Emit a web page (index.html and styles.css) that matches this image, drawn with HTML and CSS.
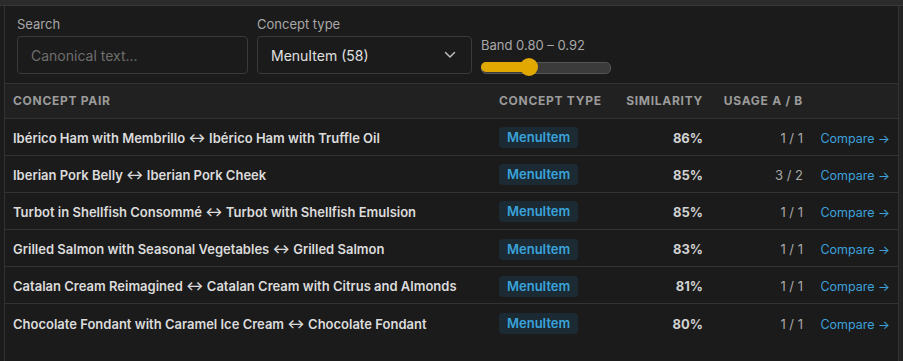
FILE: index.html
```html
<!DOCTYPE html>
<html lang="en">
<head>
    <meta charset="UTF-8">
    <meta name="viewport" content="width=device-width, initial-scale=1.0">
    <title>Concept Pairs</title>
    <link rel="stylesheet" href="styles.css">
</head>
<body>
    <div class="topbar"></div>
    <div class="frame">
        <div class="panel">
            <div class="filters">
                <div class="field">
                    <label class="field-label" for="search">Search</label>
                    <input id="search" class="text-input" type="text" placeholder="Canonical text...">
                </div>
                <div class="field">
                    <label class="field-label" for="type">Concept type</label>
                    <div class="select">
                        <span>MenuItem (58)</span>
                        <svg class="chevron" width="12" height="8" viewBox="0 0 12 8">
                            <path d="M1.5 1.5 L6 6 L10.5 1.5" fill="none" stroke="#bdbdbd" stroke-width="1.5" stroke-linecap="round" stroke-linejoin="round"/>
                        </svg>
                    </div>
                </div>
                <div class="band">
                    <span class="field-label">Band 0.80 – 0.92</span>
                    <div class="slider">
                        <div class="slider-fill" style="width: 48px;"></div>
                        <div class="slider-thumb" style="left: 39px;"></div>
                    </div>
                </div>
            </div>

            <table class="pairs">
                <colgroup>
                    <col style="width: 486px;">
                    <col style="width: 119px;">
                    <col style="width: 101px;">
                    <col style="width: 100px;">
                    <col>
                </colgroup>
                <thead>
                    <tr>
                        <th>Concept pair</th>
                        <th>Concept type</th>
                        <th class="num">Similarity</th>
                        <th class="num">Usage A / B</th>
                        <th></th>
                    </tr>
                </thead>
                <tbody>
                    <tr>
                        <td class="pair">Ibérico Ham with Membrillo ↔ Ibérico Ham with Truffle Oil</td>
                        <td><span class="badge">MenuItem</span></td>
                        <td class="num sim">86%</td>
                        <td class="num usage">1 / 1</td>
                        <td class="num"><a class="compare" href="#">Compare →</a></td>
                    </tr>
                    <tr>
                        <td class="pair">Iberian Pork Belly ↔ Iberian Pork Cheek</td>
                        <td><span class="badge">MenuItem</span></td>
                        <td class="num sim">85%</td>
                        <td class="num usage">3 / 2</td>
                        <td class="num"><a class="compare" href="#">Compare →</a></td>
                    </tr>
                    <tr>
                        <td class="pair">Turbot in Shellfish Consommé ↔ Turbot with Shellfish Emulsion</td>
                        <td><span class="badge">MenuItem</span></td>
                        <td class="num sim">85%</td>
                        <td class="num usage">1 / 1</td>
                        <td class="num"><a class="compare" href="#">Compare →</a></td>
                    </tr>
                    <tr>
                        <td class="pair">Grilled Salmon with Seasonal Vegetables ↔ Grilled Salmon</td>
                        <td><span class="badge">MenuItem</span></td>
                        <td class="num sim">83%</td>
                        <td class="num usage">1 / 1</td>
                        <td class="num"><a class="compare" href="#">Compare →</a></td>
                    </tr>
                    <tr>
                        <td class="pair">Catalan Cream Reimagined ↔ Catalan Cream with Citrus and Almonds</td>
                        <td><span class="badge">MenuItem</span></td>
                        <td class="num sim">81%</td>
                        <td class="num usage">1 / 1</td>
                        <td class="num"><a class="compare" href="#">Compare →</a></td>
                    </tr>
                    <tr class="last">
                        <td class="pair">Chocolate Fondant with Caramel Ice Cream ↔ Chocolate Fondant</td>
                        <td><span class="badge">MenuItem</span></td>
                        <td class="num sim">80%</td>
                        <td class="num usage">1 / 1</td>
                        <td class="num"><a class="compare" href="#">Compare →</a></td>
                    </tr>
                </tbody>
            </table>
        </div>
    </div>
</body>
</html>
```

FILE: styles.css
```css
* {
    box-sizing: border-box;
}
body {
    margin: 0;
    font-family: Inter, "Noto Sans", sans-serif;
    background-color: #1b1b1b;
    color: #dedede;
    height: 361px;
    overflow: hidden;
}
.topbar {
    height: 6px;
    background-color: #2b2b2b;
    border-bottom: 1px solid #383838;
}
.frame {
    padding-left: 4px;
    display: flex;
}
.panel {
    width: 895px;
    height: 360px;
    border-left: 1px solid #333;
    border-right: 1px solid #333;
    background-color: #1b1b1b;
}
.frame::after {
    content: "";
    flex: 1;
    background-color: #232323;
}
.filters {
    display: flex;
    align-items: flex-end;
    gap: 9px;
    padding: 10px 12px 9px;
    border-bottom: 1px solid #333;
}
.field {
    display: flex;
    flex-direction: column;
    gap: 4px;
}
.field-label {
    font-size: 13px;
    line-height: 16px;
    color: #a8a8a8;
}
.text-input {
    width: 231px;
    height: 38px;
    padding: 0 13px;
    background-color: #1b1b1b;
    border: 1px solid #3a3a3a;
    border-radius: 4px;
    color: #dedede;
    font-family: inherit;
    font-size: 14px;
    outline: none;
}
.text-input::placeholder {
    color: #6e6e6e;
}
.select {
    width: 215px;
    height: 38px;
    padding: 0 15px 0 13px;
    display: flex;
    align-items: center;
    justify-content: space-between;
    border: 1px solid #3a3a3a;
    border-radius: 4px;
    font-size: 14px;
    color: #e0e0e0;
}
.band {
    display: flex;
    flex-direction: column;
    gap: 4px;
    margin-bottom: -2px;
}
.slider {
    position: relative;
    width: 130px;
    height: 18px;
    margin-top: 1px;
}
.slider::before {
    content: "";
    position: absolute;
    left: 0;
    right: 0;
    top: 4px;
    height: 10px;
    background-color: #3b3b3b;
    border: 1px solid #555;
    border-radius: 5px;
}
.slider-fill {
    position: absolute;
    left: 0;
    top: 4px;
    height: 10px;
    background-color: #e0a800;
    border-radius: 5px 0 0 5px;
}
.slider-thumb {
    position: absolute;
    top: 0;
    width: 18px;
    height: 18px;
    border-radius: 50%;
    background-color: #e0a800;
}
.pairs {
    width: 893px;
    border-collapse: collapse;
    table-layout: fixed;
}
.pairs th {
    height: 34px;
    padding: 0 8px;
    background-color: #212121;
    border-bottom: 1px solid #333;
    font-size: 12px;
    font-weight: 700;
    letter-spacing: 0.06em;
    text-transform: uppercase;
    color: #9b9b9b;
    text-align: left;
}
.pairs td {
    height: 37.2px;
    padding: 2px 8px 0;
    border-bottom: 1px solid #333;
    font-size: 13px;
    white-space: nowrap;
}
.pairs tr.last td {
    border-bottom: none;
}
.pairs .num {
    text-align: right;
}
.pair {
    font-weight: 600;
    color: #dcdcdc;
}
.badge {
    display: inline-block;
    padding: 2px 8px;
    line-height: 17px;
    border-radius: 4px;
    background-color: #1b2a33;
    color: #3aa3dc;
    font-weight: 600;
    font-size: 13px;
}
.sim {
    font-weight: 700;
    color: #d2d2d2;
}
.usage {
    color: #a9a9a9;
}
.compare {
    color: #3da1dc;
    text-decoration: none;
    font-size: 12.5px;
}
```
